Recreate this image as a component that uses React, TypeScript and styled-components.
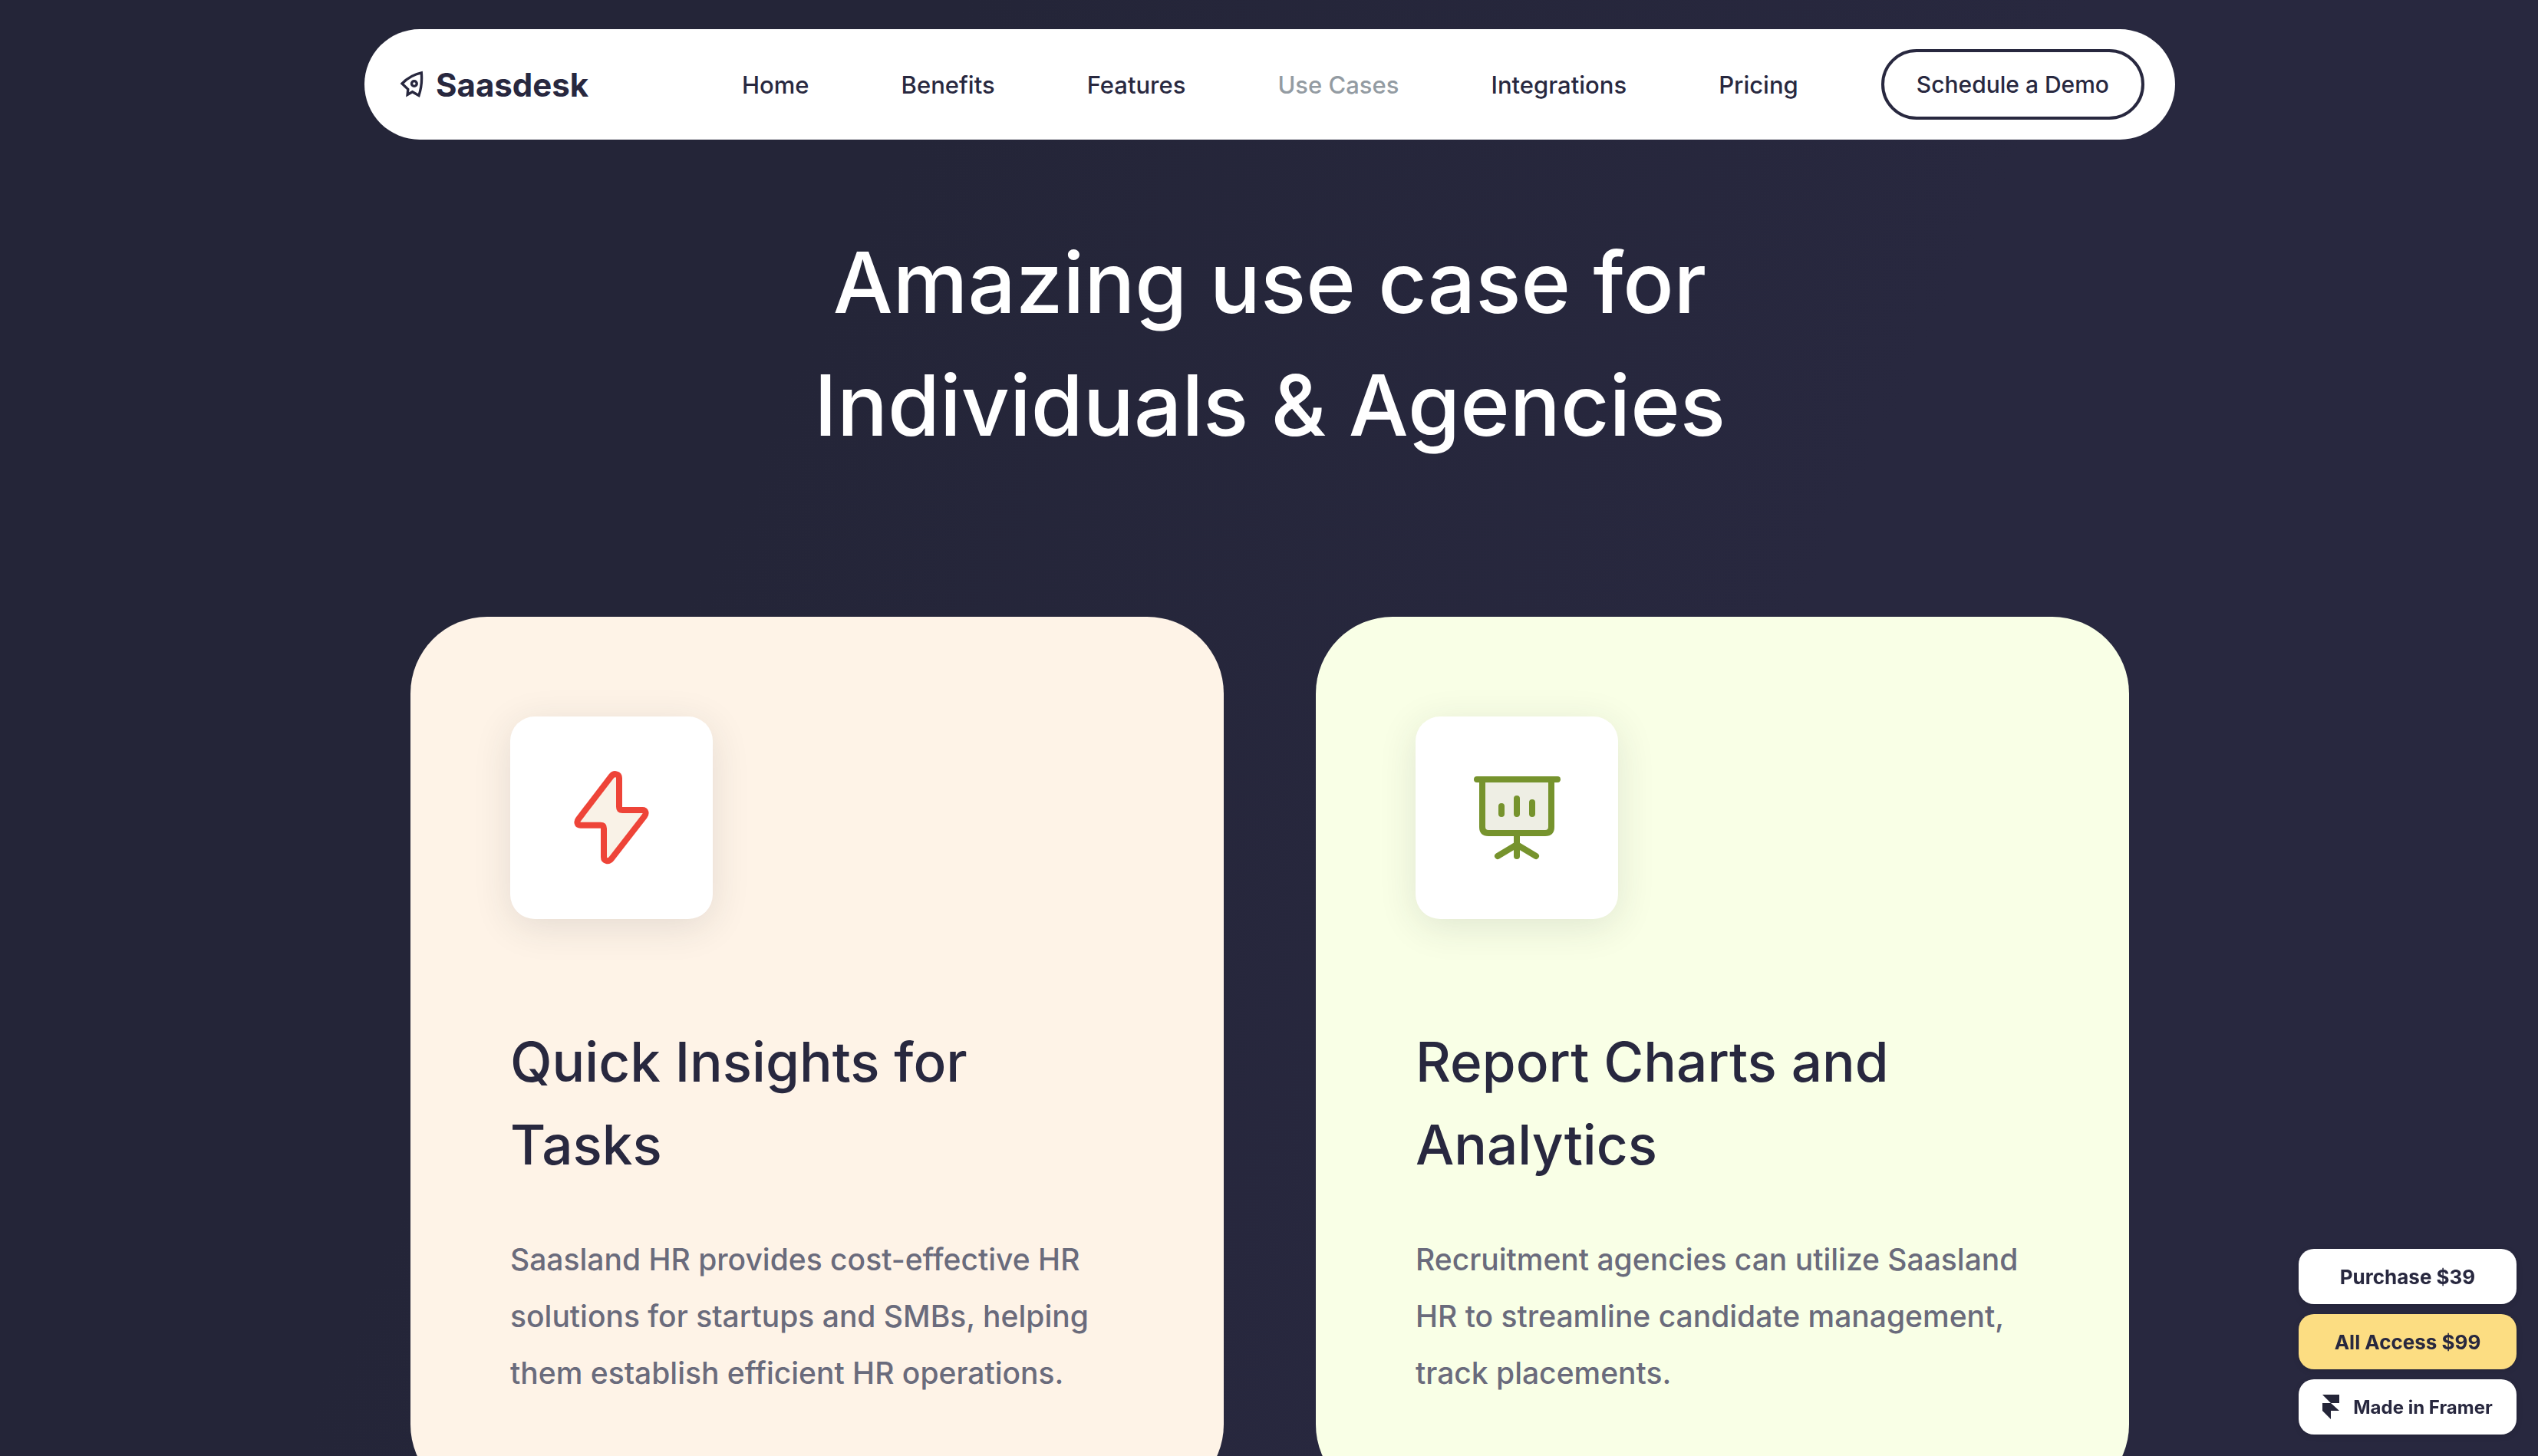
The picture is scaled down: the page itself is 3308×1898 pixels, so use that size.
import React from "react";
import styled, { createGlobalStyle } from "styled-components";

const ink = "#28283f";
const font = `Inter, "Liberation Sans", sans-serif`;

const GlobalStyle = createGlobalStyle`
  * { box-sizing: border-box; }
  body { margin: 0; font-family: ${font}; color: ${ink}; }
  h1, h2, p { margin: 0; }
  a { color: inherit; text-decoration: none; }
`;

const Page = styled.div`
  height: 100vh;
  overflow-x: hidden;
  overflow-y: auto;
  scrollbar-width: none;
  padding: 38px 40px 0 42px;
  background: linear-gradient(115deg, #242538 30%, #28283f 65%);
`;

const Header = styled.header`
  position: sticky;
  top: 0;
  z-index: 2;
  display: flex;
  align-items: center;
  max-width: 2360px;
  height: 144px;
  margin: 0 auto;
  padding: 0 40px 0 46px;
  border-radius: 72px;
  background: #fff;
`;

const Logo = styled.a`
  display: flex;
  align-items: center;
  gap: 16px;
  font-size: 42px;
  font-weight: 700;
`;

const Nav = styled.nav`
  display: flex;
  gap: 120px;
  margin: 0 108px 0 auto;
`;

const NavLink = styled.a<{ $active?: boolean }>`
  font-size: 31px;
  font-weight: 500;
  white-space: nowrap;
  color: ${(p) => (p.$active ? "#939ba2" : ink)};
`;

const DemoButton = styled.button`
  height: 92px;
  padding: 0 42px;
  border: 4px solid ${ink};
  border-radius: 46px;
  background: transparent;
  color: ${ink};
  font: 500 30px ${font};
  white-space: nowrap;
  cursor: pointer;
`;

const Title = styled.h1`
  margin: 106px 0 196px;
  text-align: center;
  font-size: 110px;
  font-weight: 500;
  line-height: 160px;
  color: #fff;

  span { display: block; }
`;

const Cards = styled.main`
  display: grid;
  grid-template-columns: 1fr 1fr;
  gap: 120px;
  max-width: 2240px;
  margin: 0 auto 120px;
`;

const Card = styled.article<{ $tone: string }>`
  padding: 130px;
  border-radius: 100px;
  background: ${(p) => p.$tone};
`;

const Tile = styled.div`
  display: grid;
  place-items: center;
  width: 264px;
  height: 264px;
  border-radius: 32px;
  background: #fff;
  box-shadow: 0 10px 50px rgba(38, 50, 56, 0.12);
`;

const CardTitle = styled.h2`
  max-width: 680px;
  margin: 132px 0 59px;
  font-size: 71px;
  font-weight: 500;
  line-height: 108px;
`;

const CardText = styled.p`
  font-size: 39px;
  font-weight: 500;
  line-height: 74px;
  color: #6a6b7c;
`;

const Badges = styled.aside`
  position: fixed;
  right: 28px;
  bottom: 28px;
  z-index: 3;
  display: grid;
  gap: 13px;
  width: 284px;
`;

const Badge = styled.a<{ $gold?: boolean; $small?: boolean }>`
  display: flex;
  align-items: center;
  justify-content: center;
  gap: 18px;
  height: 72px;
  border-radius: 20px;
  background: ${(p) => (p.$gold ? "#fcdd82" : "#fff")};
  font-size: ${(p) => (p.$small ? 24 : 26)}px;
  font-weight: 700;
  white-space: nowrap;
  box-shadow: 0 2px 8px rgba(0, 0, 0, 0.1);
`;

const RocketIcon = () => (
  <svg width="31" height="36" viewBox="162 25 92 106" fill="none" stroke={ink} strokeWidth="10" aria-hidden="true">
    <path d="M171 75Q202 42 246 33Q250 80 236 121L211 107L192 118L194 97Z" />
    <circle cx="218" cy="75" r="10" />
  </svg>
);

const BoltIcon = () => (
  <svg width="144" height="144" viewBox="15 12 432 432" aria-hidden="true">
    <path
      d="M230 66C241 52 261 56 261 73V185Q261 198 274 198H352C366 198 368 212 360 222L231 388C220 402 201 398 201 382V270Q201 257 188 257H110C96 257 94 243 102 233Z"
      fill="#f9f2e7"
      stroke="#ee4438"
      strokeWidth="24"
      strokeLinejoin="round"
    />
  </svg>
);

const BoardIcon = () => (
  <svg width="144" height="144" viewBox="0 0 144 144" fill="none" stroke="#76932d" strokeWidth="8" strokeLinecap="round" aria-hidden="true">
    <path d="M27 22V84Q27 92 35 92H109Q117 92 117 84V22" fill="#eeeee4" />
    <path d="M20 22H125M52 57V67M72 47V67M92 52V67M72 92V122M72 107L47 122M72 107L97 122" />
  </svg>
);

const FramerIcon = () => (
  <svg width="22" height="32" viewBox="0 0 22 32" fill="#242538" aria-hidden="true">
    <path d="M0 0H22V11H11ZM0 11H11L22 21H11V32L0 21Z" />
  </svg>
);

const links = ["Home", "Benefits", "Features", "Use Cases", "Integrations", "Pricing"];

const cases = [
  {
    title: "Quick Insights for Tasks",
    text: "Saasland HR provides cost-effective HR solutions for startups and SMBs, helping them establish efficient HR operations.",
    tone: "#fef3e7",
    icon: <BoltIcon />,
  },
  {
    title: "Report Charts and Analytics",
    text: "Recruitment agencies can utilize Saasland HR to streamline candidate management, track placements.",
    tone: "#f9ffe6",
    icon: <BoardIcon />,
  },
];

export default function App() {
  return (
    <Page>
      <GlobalStyle />
      <Header>
        <Logo href="#">
          <RocketIcon />
          Saasdesk
        </Logo>
        <Nav>
          {links.map((label) => (
            <NavLink key={label} href="#" $active={label === "Use Cases"}>
              {label}
            </NavLink>
          ))}
        </Nav>
        <DemoButton type="button">Schedule a Demo</DemoButton>
      </Header>
      <Title>
        <span>Amazing use case for</span>
        <span>Individuals &amp; Agencies</span>
      </Title>
      <Cards>
        {cases.map((c) => (
          <Card key={c.title} $tone={c.tone}>
            <Tile>{c.icon}</Tile>
            <CardTitle>{c.title}</CardTitle>
            <CardText>{c.text}</CardText>
          </Card>
        ))}
      </Cards>
      <Badges>
        <Badge href="#">Purchase $39</Badge>
        <Badge href="#" $gold>
          All Access $99
        </Badge>
        <Badge href="#" $small>
          <FramerIcon />
          Made in Framer
        </Badge>
      </Badges>
    </Page>
  );
}
